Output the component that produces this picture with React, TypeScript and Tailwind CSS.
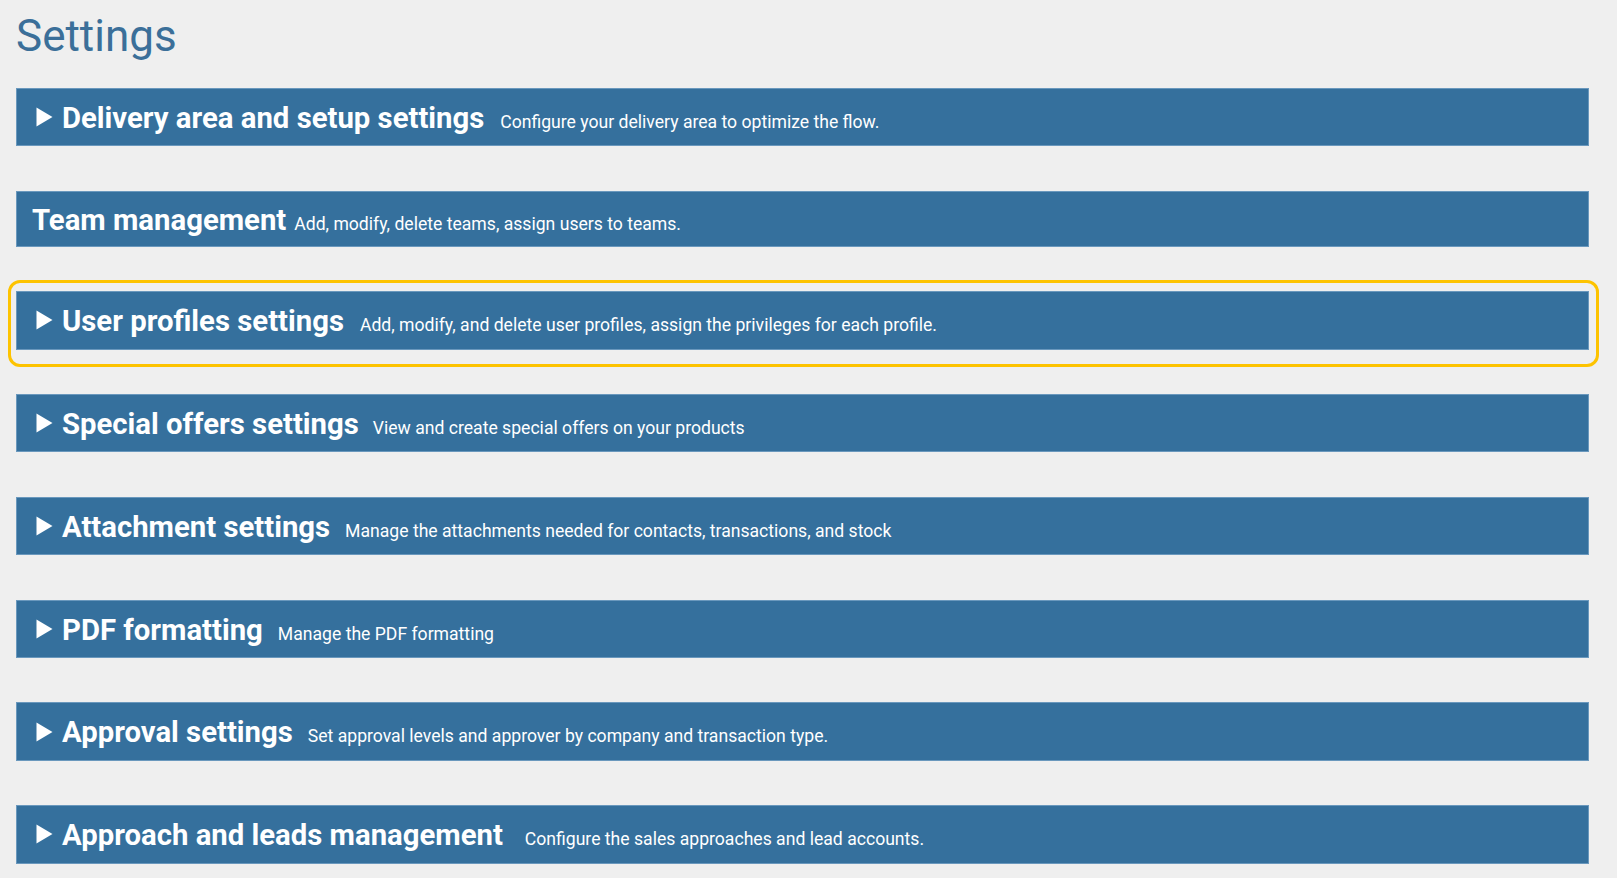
import React from "react";

type Section = {
  title: string;
  description: string;
  expandable: boolean;
  highlighted?: boolean;
  gapClass: string;
  heightClass: string;
};

const sections: Section[] = [
  {
    title: "Delivery area and setup settings",
    description: "Configure your delivery area to optimize the flow.",
    expandable: true,
    gapClass: "ml-[16px]",
    heightClass: "h-[58.3px]",
  },
  {
    title: "Team management",
    description: "Add, modify, delete teams, assign users to teams.",
    expandable: false,
    gapClass: "ml-[8px]",
    heightClass: "h-[56px]",
  },
  {
    title: "User profiles settings",
    description: "Add, modify, and delete user profiles, assign the privileges for each profile.",
    expandable: true,
    highlighted: true,
    gapClass: "ml-[16px]",
    heightClass: "h-[58.3px]",
  },
  {
    title: "Special offers settings",
    description: "View and create special offers on your products",
    expandable: true,
    gapClass: "ml-[14px]",
    heightClass: "h-[58.3px]",
  },
  {
    title: "Attachment settings",
    description: "Manage the attachments needed for contacts, transactions, and stock",
    expandable: true,
    gapClass: "ml-[15px]",
    heightClass: "h-[58.3px]",
  },
  {
    title: "PDF formatting",
    description: "Manage the PDF formatting",
    expandable: true,
    gapClass: "ml-[15px]",
    heightClass: "h-[58.3px]",
  },
  {
    title: "Approval settings",
    description: "Set approval levels and approver by company and transaction type.",
    expandable: true,
    gapClass: "ml-[15px]",
    heightClass: "h-[58.3px]",
  },
  {
    title: "Approach and leads management",
    description: "Configure the sales approaches and lead accounts.",
    expandable: true,
    gapClass: "ml-[22px]",
    heightClass: "h-[58.3px]",
  },
];

function Caret() {
  return (
    <svg width="17" height="20" viewBox="0 0 17 20" className="mr-[9px] shrink-0 self-center">
      <path d="M0.5 0.5 L16.5 10 L0.5 19.5 Z" fill="#ffffff" />
    </svg>
  );
}

function SectionBar({ section }: { section: Section }) {
  return (
    <div className="relative">
      {section.highlighted && (
        <div className="pointer-events-none absolute -top-[11px] -right-[10px] -bottom-[17px] -left-[8px] rounded-[12px] border-[3px] border-[#fdc300]" />
      )}
      <div
        className={`flex items-center border border-[#6a98bd] bg-[#35709d] ${section.heightClass} ${
          section.expandable ? "pl-[19px]" : "pl-[15px]"
        }`}
      >
        {section.expandable && <Caret />}
        <div className="flex items-baseline whitespace-nowrap pt-[3px] text-white">
          <span className="text-[29.3px] font-bold leading-none">{section.title}</span>
          <span className={`${section.gapClass} text-[17.6px] font-normal leading-none`}>
            {section.description}
          </span>
        </div>
      </div>
    </div>
  );
}

export default function App() {
  return (
    <div className="min-h-screen bg-[#efefef] font-['Roboto','Liberation_Sans',sans-serif]">
      <h1 className="pl-[16px] pt-[12px] text-[44px] font-normal leading-[48px] text-[#3b6f99]">Settings</h1>
      <div className="mt-[28px] flex flex-col gap-[44.5px] pb-[14px] pl-[16px] pr-[28px]">
        {sections.map((s) => (
          <SectionBar key={s.title} section={s} />
        ))}
      </div>
    </div>
  );
}
